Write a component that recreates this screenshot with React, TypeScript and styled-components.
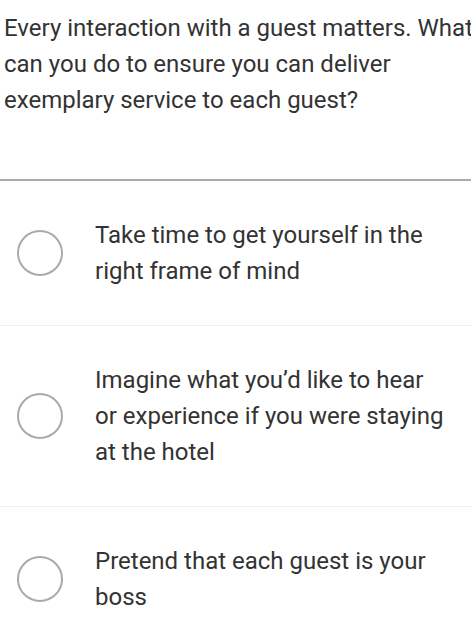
import styled, { createGlobalStyle } from "styled-components";

const GlobalStyle = createGlobalStyle`
  html, body {
    margin: 0;
    padding: 0;
    background: #ffffff;
    overflow: hidden;
  }
  body {
    font-family: Roboto, "Liberation Sans", sans-serif;
    color: #333333;
  }
`;

const Page = styled.div`
  width: 471px;
  overflow: hidden;
`;

const Question = styled.h1`
  width: 490px;
  height: 179px;
  box-sizing: border-box;
  margin: 0;
  padding: 10px 0 0 4px;
  font-size: 24px;
  font-weight: 400;
  line-height: 36px;
  color: #333333;
`;

const Divider = styled.hr`
  margin: 0;
  border: none;
  height: 2px;
  background: #aaaaaa;
`;

const OptionList = styled.ul`
  list-style: none;
  margin: 0;
  padding: 0;
`;

const Option = styled.li`
  display: flex;
  align-items: center;
  padding: 36px 0;
  border-bottom: 1px solid #eeeeee;
  cursor: pointer;
`;

const Radio = styled.span`
  flex: none;
  width: 42px;
  height: 42px;
  margin: 0 32px 0 17px;
  border: 2px solid #aaaaaa;
  border-radius: 50%;
`;

const Label = styled.span`
  font-size: 24px;
  line-height: 36px;
  color: #333333;
  padding-right: 24px;
`;

const options = [
  "Take time to get yourself in the right frame of mind",
  "Imagine what you’d like to hear or experience if you were staying at the hotel",
  "Pretend that each guest is your boss",
];

const App = () => {
  return (
    <Page>
      <GlobalStyle />
      <Question>
        Every interaction with a guest matters. What can you do to ensure you
        can deliver exemplary service to each guest?
      </Question>
      <Divider />
      <OptionList>
        {options.map((text, index) => (
          <Option key={index}>
            <Radio />
            <Label>{text}</Label>
          </Option>
        ))}
      </OptionList>
    </Page>
  );
};

export default App;
